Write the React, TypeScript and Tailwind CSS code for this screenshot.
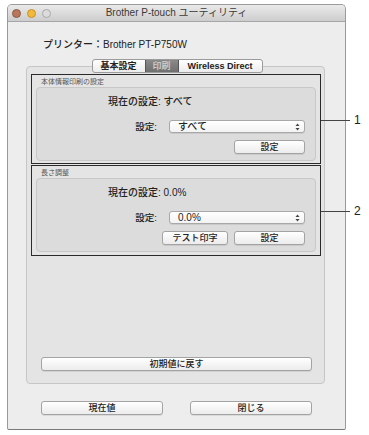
import React from "react";

const FONT = { fontFamily: '"Liberation Sans", "Noto Sans CJK JP", sans-serif' };

function MacButton({ children, className = "" }: { children: React.ReactNode; className?: string }) {
  return (
    <div
      className={`flex items-center justify-center h-[14px] rounded-[3px] border border-[#a3a3a3] bg-gradient-to-b from-[#ffffff] to-[#ececec] text-[9px] font-medium leading-none text-[#222] shadow-[0_1px_0_rgba(0,0,0,0.08)] ${className}`}
    >
      {children}
    </div>
  );
}

function Select({ value }: { value: string }) {
  return (
    <div className="flex items-center justify-between w-[136px] h-[13px] rounded-[3px] border border-[#a8a8a8] bg-gradient-to-b from-[#ffffff] to-[#f3f3f3] pl-[8px] pr-[4px] text-[10px] font-medium leading-none text-[#222] shadow-[0_1px_0_rgba(0,0,0,0.08)]">
      <span>{value}</span>
      <svg width="5" height="8" viewBox="0 0 5 8">
        <path d="M2.5 0.5 L4.5 3 L0.5 3 Z" fill="#444" />
        <path d="M2.5 7.5 L4.5 5 L0.5 5 Z" fill="#444" />
      </svg>
    </div>
  );
}

function Section({
  label,
  current,
  value,
  num,
  extraButton,
  height,
}: {
  label: string;
  current: string;
  value: string;
  num: string;
  extraButton?: boolean;
  height: number;
}) {
  return (
    <div className="relative w-[290px] border border-[#2a2a2a] flex flex-col px-[4px]" style={{ height }}>
      <div className="h-[12px] pl-[5px] flex items-center text-[7px] leading-none text-[#555]">{label}</div>
      <div className="h-[74px] rounded-[4px] border border-[#c8c8c8] bg-[#dcdcdc] pt-[8px]">
        <div className="h-[12px] pl-[71px] flex items-center text-[10px] font-medium leading-none text-[#222]">
          {current}
        </div>
        <div className="mt-[12px] flex items-center h-[13px]">
          <div className="w-[120px] text-right text-[9.5px] font-medium leading-none text-[#222]">設定:</div>
          <div className="ml-[12px]">
            <Select value={value} />
          </div>
        </div>
        <div className="mt-[7px] flex justify-end gap-[6px] pr-[10px]">
          {extraButton && <MacButton className="w-[66px] h-[13px]">テスト印字</MacButton>}
          <MacButton className="w-[71px] h-[13px]">設定</MacButton>
        </div>
      </div>
      <div className="absolute left-[289px] top-[45px] w-[29px] h-px bg-[#444]" />
      <div className="absolute left-[322px] top-[39px] text-[12px] leading-none text-[#222]">{num}</div>
    </div>
  );
}

export default function App() {
  return (
    <div className="w-[369px] h-[435px] bg-white" style={FONT}>
      <div className="pt-[4px] pl-[7px]">
        <div className="w-[339px] h-[426px] rounded-t-[5px] rounded-b-[2px] border border-[#9a9a9a] border-b-[#7a7a7a] bg-[#ededed] flex flex-col">
          {/* title bar */}
          <div className="relative h-[17px] rounded-t-[4px] bg-gradient-to-b from-[#eaeaea] to-[#cdcdcd] border-b border-[#a6a6a6] flex items-center justify-center">
            <div className="absolute left-[4px] top-[4px] flex gap-[6px]">
              <div className="w-[9px] h-[9px] rounded-full bg-[#b8775a] border border-[#8a5a45]" />
              <div className="w-[9px] h-[9px] rounded-full bg-[#f2b93b] border border-[#c8912a]" />
              <div className="w-[9px] h-[9px] rounded-full bg-[#dcdcdc] border border-[#a9a9a9]" />
            </div>
            <div className="text-[10px] leading-none text-[#3a3a3a]">Brother P-touch ユーティリティ</div>
          </div>

          {/* printer label */}
          <div className="mt-[17px] h-[12px] pl-[35px] flex items-center text-[10px] font-medium leading-none text-[#222]">
            プリンター：Brother PT-P750W
          </div>

          {/* tabs */}
          <div className="relative z-10 mt-[8px] flex justify-center pl-[1px]">
            <div className="flex h-[14px] rounded-[3px] border border-[#9b9b9b] bg-gradient-to-b from-[#ffffff] to-[#ececec] overflow-hidden text-[9px] font-bold leading-none">
              <div className="w-[52px] flex items-center justify-center text-[#222]">基本設定</div>
              <div className="w-[34px] flex items-center justify-center bg-gradient-to-b from-[#8a8a8a] to-[#6f6f6f] text-[#c8c8c8] border-x border-[#555]">
                印刷
              </div>
              <div className="w-[83px] flex items-center justify-center text-[#222]">Wireless Direct</div>
            </div>
          </div>

          {/* tab box */}
          <div className="-mt-[7px] ml-[18px] w-[299px] h-[318px] rounded-[4px] border border-[#c6c6c6] bg-[#e4e4e4] flex flex-col pt-[7px] pl-[4px]">
            <Section label="本体情報印刷の設定" current="現在の設定: すべて" value="すべて" num="1" height={90} />
            <div className="mt-[1px]">
              <Section label="長さ調整" current="現在の設定: 0.0%" value="0.0%" num="2" extraButton height={91} />
            </div>
            <div className="mt-auto mb-[12px] pl-[10px]">
              <MacButton className="w-[271px]">初期値に戻す</MacButton>
            </div>
          </div>

          {/* bottom buttons */}
          <div className="mt-[17px] flex pl-[33px] gap-[27px]">
            <MacButton className="w-[122px]">現在値</MacButton>
            <MacButton className="w-[122px]">閉じる</MacButton>
          </div>
        </div>
      </div>
    </div>
  );
}
